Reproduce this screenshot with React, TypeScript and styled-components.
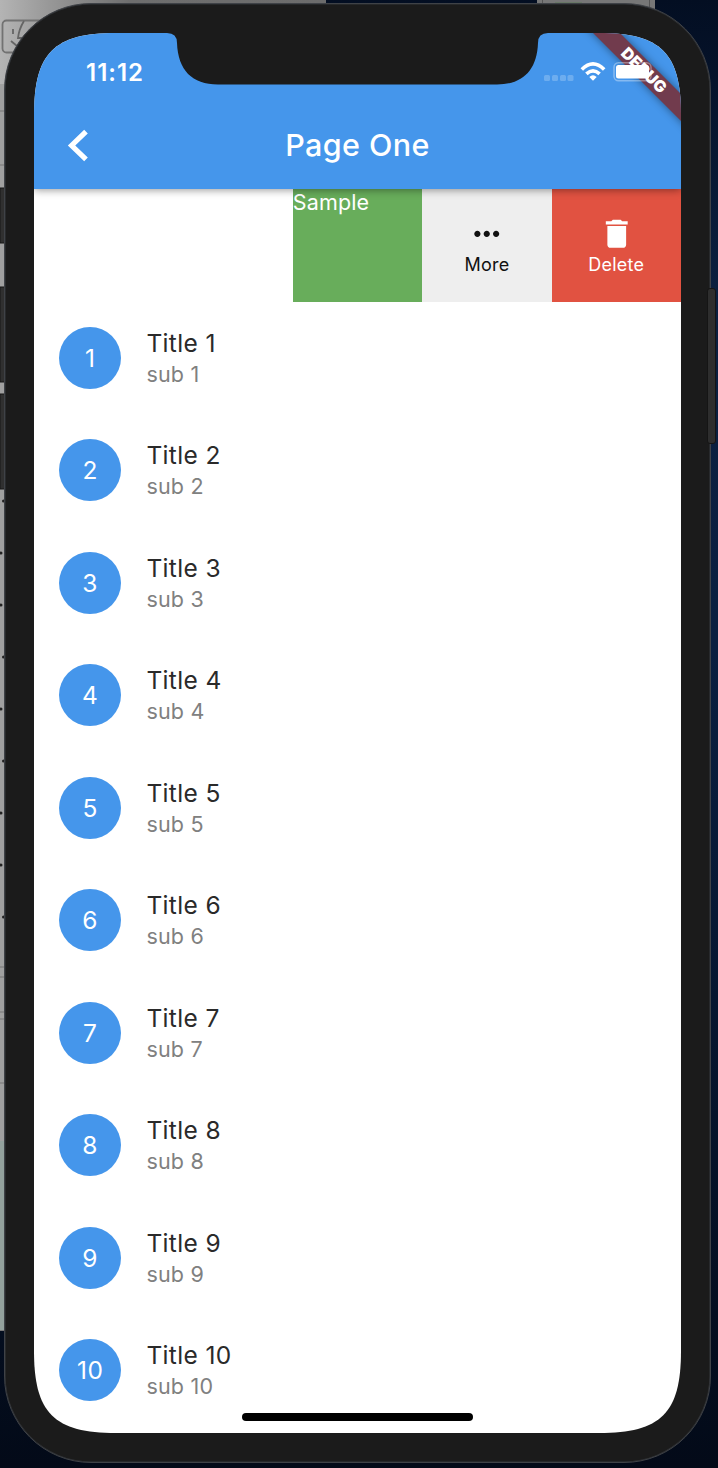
import React from "react";
import styled, { createGlobalStyle } from "styled-components";

const Global = createGlobalStyle`
  *, *::before, *::after { box-sizing: border-box; }
  html, body { margin: 0; padding: 0; }
  body { background: #030e22; overflow: hidden; font-family: Inter, "Liberation Sans", sans-serif; }
`;

const blue = "#4596eb";

const Desktop = styled.div`
  position: relative;
  width: 718px;
  height: 1468px;
  overflow: hidden;
  padding: 3px 7px 5px 4px;
  background: linear-gradient(180deg, #030e22 0, #0b2040 300px, #0a1f40 650px, #061630 1000px, #030a18 1468px);
`;

const Backdrop = styled.svg`
  position: absolute;
  inset: 0;
  width: 718px;
  height: 1468px;
`;

const Phone = styled.div`
  position: relative;
  width: 707px;
  height: 1460px;
  padding: 29px;
  border: 1px solid #3f4247;
  border-radius: 87px;
  background: #1b1b1b;
  box-shadow: inset 0 0 0 0.6px #33363a;
`;

const SideKey = styled.div`
  position: absolute;
  left: 707px;
  top: 288px;
  width: 9px;
  height: 156px;
  border: 1px solid #151515;
  border-radius: 3px;
  background: #2e2e2e;
`;

const Screen = styled.div`
  position: relative;
  display: flex;
  flex-direction: column;
  width: 647px;
  height: 1400px;
  overflow: hidden;
  background: #fff;
  clip-path: path("M0 82 C0 20 20 0 82 0 H565 C627 0 647 20 647 82 V1318 C647 1380 627 1400 565 1400 H82 C20 1400 0 1380 0 1318 Z");
`;

const TopBar = styled.header`
  position: relative;
  z-index: 1;
  flex: none;
  height: 156px;
  background: ${blue};
  box-shadow: 0 1px 8px rgba(0, 0, 0, 0.42);
`;

const Notch = styled.svg`
  position: absolute;
  z-index: 3;
  top: 0;
  left: 133px;
`;

const StatusBar = styled.div`
  position: relative;
  z-index: 3;
  display: flex;
  justify-content: space-between;
  height: 69px;
  padding: 0 26px 0 52px;
`;

const Clock = styled.span`
  padding-top: 25px;
  font-size: 24px;
  line-height: 30px;
  font-weight: 600;
  color: #fff;
  letter-spacing: 1px;
`;

const StatusIcons = styled.svg`
  width: 112px;
  height: 69px;
  flex: none;
`;

const NavBar = styled.div`
  display: grid;
  grid-template-columns: 88px 1fr 88px;
  align-items: center;
  height: 87px;
`;

const BackIcon = styled.svg`
  width: 88px;
  height: 87px;
`;

const PageTitle = styled.h1`
  margin: 0;
  padding-bottom: 2px;
  text-align: center;
  font-size: 30.5px;
  line-height: 38px;
  font-weight: 500;
  letter-spacing: 0.4px;
  color: #fff;
`;

const DebugBanner = styled.div`
  position: absolute;
  z-index: 2;
  left: 510px;
  top: 27.5px;
  width: 200px;
  height: 19px;
  transform: rotate(45deg);
  background: #713b4d;
  box-shadow: 0 0 9px rgba(0, 0, 0, 0.45);
  color: #fff;
  font-size: 16px;
  line-height: 19px;
  font-weight: 900;
  letter-spacing: 0.3px;
  text-align: center;
`;

const SlideRow = styled.div`
  display: grid;
  grid-template-columns: 2fr 1fr 1fr 1fr;
  flex: none;
  height: 112.5px;
`;

const Action = styled.div<{ $bg: string; $fg: string }>`
  display: flex;
  flex-direction: column;
  align-items: center;
  justify-content: center;
  background: ${(p) => p.$bg};
  color: ${(p) => p.$fg};
  font-size: 18px;
  line-height: 23px;
  letter-spacing: 0.25px;
`;

const SampleAction = styled(Action)`
  align-items: flex-start;
  justify-content: flex-start;
  font-size: 21.5px;
  line-height: 27px;
  letter-spacing: 0.15px;
`;

const ActionIcon = styled.svg`
  width: 37.5px;
  height: 37.5px;
  fill: currentColor;
`;

const List = styled.div`
  display: flex;
  flex-direction: column;
`;

const Row = styled.div`
  display: flex;
  flex: none;
  align-items: center;
  gap: 25px;
  height: 112.5px;
  padding-left: 25px;
`;

const Avatar = styled.div`
  display: flex;
  align-items: center;
  justify-content: center;
  width: 62.4px;
  height: 62.4px;
  border-radius: 50%;
  background: ${blue};
  color: #fff;
  font-size: 24.5px;
  letter-spacing: 0.6px;
`;

const RowText = styled.div`
  padding-top: 1.4px;
`;

const RowTitle = styled.div`
  font-size: 24.5px;
  line-height: 32px;
  letter-spacing: 0.35px;
  color: #2a2a2a;
`;

const RowSub = styled.div`
  font-size: 21.5px;
  line-height: 31px;
  letter-spacing: 0.2px;
  color: #808080;
`;

const HomeBar = styled.div`
  position: absolute;
  left: 208px;
  bottom: 12.5px;
  width: 231px;
  height: 8px;
  border-radius: 4px;
  background: #000;
`;

const items = Array.from({ length: 10 }, (_, i) => i + 1);
const rivets = [501, 553, 605, 657, 709, 761, 813, 865, 917];

export default function App() {
  return (
    <Desktop>
      <Global />
      <Backdrop viewBox="0 0 718 1468">
        <defs>
          <linearGradient id="metal" x1="0" y1="0" x2="1" y2="0">
            <stop offset="0" stopColor="#b4b4b4" />
            <stop offset=".15" stopColor="#989898" />
            <stop offset=".4" stopColor="#6e6e6e" />
            <stop offset="1" stopColor="#6c6c6c" />
          </linearGradient>
        </defs>
        <path d="M0 0H326V200H0Z" fill="url(#metal)" />
        <path d="M0 84H5V1141H0Z" fill="#a0a0a0" />
        <path d="M0 1141H5V1331H0Z" fill="#93a19d" />
        <path d="M0 1330.5H5" stroke="#777" />
        <path d="M537 0H655V20H537Z" fill="#777" />
        <path d="M542.5 0V20M649.5 0V20" stroke="#555" />
        <path d="M555 3H582" stroke="#5d7a58" />
        <rect x="2.5" y="20.5" width="60" height="32" rx="4" fill="none" stroke="#727272" strokeWidth="1.8" />
        <path d="M13 29v5M24 21q-5 8-6 17h8M11 41l6 5" fill="none" stroke="#656565" strokeWidth="1.8" />
        <path d="M0 188H5V243H0ZM0 287H5V382H0ZM0 394H5V489H0Z" fill="#303030" stroke="#171717" />
        {rivets.map((y, i) => (
          <circle key={y} cx={i === 0 || i === 3 || i === 5 || i === 8 ? 3.5 : 1} cy={y} r="1.5" fill="#222" />
        ))}
        <path d="M0 111H5M0 165H5M0 967H5M0 977H5M0 1012H5M0 1019H5M0 1083H5" stroke="#777" />
      </Backdrop>
      <Phone>
        <Screen>
          <TopBar>
            <DebugBanner>DEBUG</DebugBanner>
            <StatusBar>
              <Clock>11:12</Clock>
              <StatusIcons viewBox="543 33 112 69">
                <g fill="#fff" fillOpacity=".22">
                  <rect x="544" y="75" width="6" height="6" rx="1.5" />
                  <rect x="552" y="75" width="6" height="6" rx="1.5" />
                  <rect x="560" y="75" width="6" height="6" rx="1.5" />
                  <rect x="567.5" y="75" width="6" height="6" rx="1.5" />
                </g>
                <path d="M581.8 69.5Q593 58.4 604.2 69.5M586.4 73.9Q593 67.8 599.6 73.9" fill="none" stroke="#fff" strokeWidth="3.6" />
                <path d="M589.3 77Q593 73.6 596.7 77L593 80.8Z" fill="#fff" />
                <rect x="614" y="62.7" width="37" height="18" rx="4.5" fill="none" stroke="#fff" strokeOpacity=".35" strokeWidth="1.5" />
                <rect x="616" y="65" width="33" height="13.4" rx="2.5" fill="#fff" />
              </StatusIcons>
            </StatusBar>
            <Notch width="391" height="52" viewBox="167 33 391 52">
              <path d="M167 33Q177 33 177 43C178 70 192 84.5 218 84.5H497C523 84.5 537 70 538 43Q538 33 548 33Z" fill="#1b1b1b" />
            </Notch>
            <NavBar>
              <BackIcon viewBox="34 102 88 87">
                <path d="M86 131.6L71.6 145.5L86 159.4" fill="none" stroke="#fff" strokeWidth="5.2" />
              </BackIcon>
              <PageTitle>Page One</PageTitle>
            </NavBar>
          </TopBar>
          <SlideRow>
            <span />
            <SampleAction $bg="#68ad5b" $fg="#fff">Sample</SampleAction>
            <Action $bg="#eee" $fg="#111">
              <ActionIcon viewBox="0 0 24 24">
                <path d="M6 10c-1.1 0-2 .9-2 2s.9 2 2 2 2-.9 2-2-.9-2-2-2zm12 0c-1.1 0-2 .9-2 2s.9 2 2 2 2-.9 2-2-.9-2-2-2zm-6 0c-1.1 0-2 .9-2 2s.9 2 2 2 2-.9 2-2-.9-2-2-2z" />
              </ActionIcon>
              More
            </Action>
            <Action $bg="#e15241" $fg="#fff">
              <ActionIcon viewBox="0 0 24 24">
                <path d="M6 19c0 1.1.9 2 2 2h8c1.1 0 2-.9 2-2V7H6v12zM19 4h-3.5l-1-1h-5l-1 1H5v2h14V4z" />
              </ActionIcon>
              Delete
            </Action>
          </SlideRow>
          <List>
            {items.map((n) => (
              <Row key={n}>
                <Avatar>{n}</Avatar>
                <RowText>
                  <RowTitle>Title {n}</RowTitle>
                  <RowSub>sub {n}</RowSub>
                </RowText>
              </Row>
            ))}
          </List>
          <HomeBar />
        </Screen>
      </Phone>
      <SideKey />
    </Desktop>
  );
}
